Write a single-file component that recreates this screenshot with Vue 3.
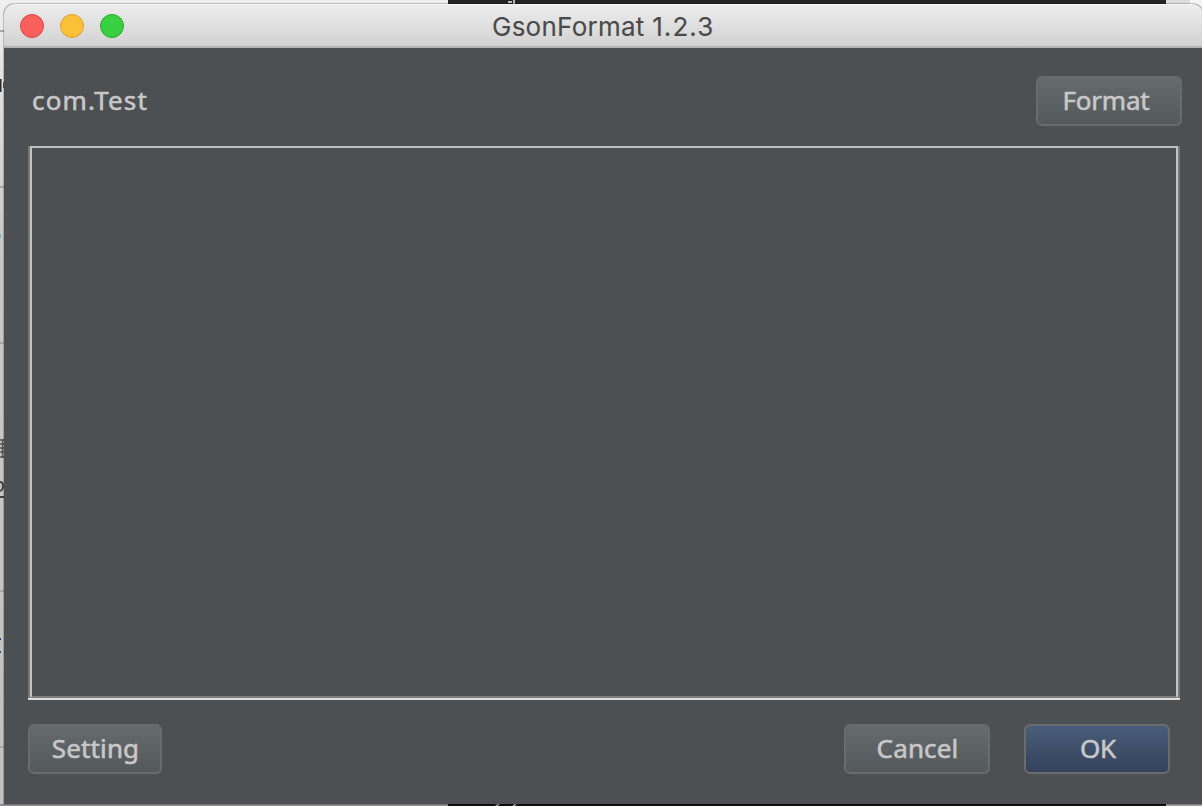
<script setup>
const lights = ['red', 'yellow', 'green']
</script>

<template>
  <main class="desktop">
    <svg class="backdrop" width="1202" height="806" aria-hidden="true">
      <defs>
        <linearGradient id="edge" x1="0" y1="0" x2="0" y2="1">
          <stop offset="0" stop-color="#efeff0" />
          <stop offset=".12" stop-color="#dedede" />
          <stop offset=".3" stop-color="#c8c8c8" />
          <stop offset="1" stop-color="#c1c1c1" />
        </linearGradient>
      </defs>
      <rect width="1202" height="806" fill="url(#edge)" />
      <rect x="448" width="718" height="4" fill="#242424" />
      <rect x="1166" width="24" height="4" fill="#dcdcdc" />
      <rect x="1190" width="12" height="8" fill="#f5f5f5" />
      <path d="M508 2h4M514 0v4" stroke="#b8b8b8" stroke-width="2" />
      <path d="M0 31h4M0 187h4M0 343h4M0 591h4M0 747h4" stroke="#a5a7aa" stroke-width="2" />
      <path d="M.5 79v13" stroke="#252b32" stroke-width="2" />
      <path d="M3.5 82v6" stroke="#765b48" stroke-width="1" />
      <path d="M0 234v4" stroke="#76b6c2" stroke-width="2" />
      <path d="M0 440h4M0 444h4M0 448h4M0 452h4M0 457h4M2.5 439v19" stroke="#555" stroke-width="1.5" />
      <path d="M0 482q3 0 3 4t-3 5M0 497h4" fill="none" stroke="#444" stroke-width="2" />
      <path d="M0 639h1M0 652h1" stroke="#26439b" stroke-width="2" />
      <rect y="804" width="448" height="2" fill="#909090" />
      <rect x="448" y="804" width="718" height="2" fill="#101010" />
      <rect x="1166" y="804" width="36" height="2" fill="#a0a0a0" />
      <path d="M496 806l3-2M513 806l3-2" stroke="#999" stroke-width="2" />
    </svg>
    <section class="window">
      <header class="titlebar">
        <div class="lights"><i v-for="c in lights" :key="c" :class="c" /></div>
        <h1>GsonFormat <span class="version">1.2.3</span></h1>
      </header>
      <div class="content">
        <div class="top">
          <label>com.Test</label>
          <button class="format">Format</button>
        </div>
        <div class="editor"><div class="inner" /></div>
        <footer>
          <button class="setting">Setting</button>
          <button class="cancel">Cancel</button>
          <button class="ok">OK</button>
        </footer>
      </div>
    </section>
  </main>
</template>

<style>
body { margin: 0; overflow: hidden; }
</style>

<style scoped>
* { box-sizing: border-box; }
.desktop { position: relative; width: 1202px; height: 806px; padding: 4px 0 0 4px; overflow: hidden; }
.backdrop { position: absolute; inset: 0; }
.window { position: relative; width: 1199px; height: 800px; border-radius: 10px 10px 0 0; background: #4c5052; overflow: hidden; box-shadow: 0 0 0 1px rgba(0, 0, 0, .2); }
.titlebar { position: relative; display: flex; align-items: center; height: 44px; padding-left: 16px; background: linear-gradient(#ececec, #d2d2d2); border-top: 1px solid #f7f7f7; border-bottom: 2px solid #b2b2b2; }
.lights { display: flex; gap: 16px; }
.lights i { width: 24px; height: 24px; border-radius: 50%; border: 1px solid transparent; }
.lights .red { background: #fc605c; border-color: #e04443; }
.lights .yellow { background: #fcc138; border-color: #dea032; }
.lights .green { background: #38d042; border-color: #27ab2c; }
h1 { position: absolute; left: 488px; top: 5px; margin: 0; font: 400 26px/34px Inter, sans-serif; letter-spacing: .25px; color: #4a4a4a; white-space: nowrap; -webkit-text-stroke: .1px; }
.version { letter-spacing: 1.1px; }
.content { padding: 28px 21px 30px 24px; font-family: "Noto Sans", sans-serif; }
.top { display: flex; align-items: flex-start; justify-content: space-between; height: 50px; }
label { padding-left: 4px; font-size: 26px; line-height: 48px; letter-spacing: 1.15px; color: #c8c8c8; -webkit-text-stroke: .55px; }
button { display: flex; align-items: center; justify-content: center; height: 50px; padding: 0 0 2px; border: 2px solid #696c6d; border-radius: 6px; background: linear-gradient(#656a6c, #54595b) padding-box #696c6d; color: #c8c8c8; font: 400 26px/44px "Noto Sans", sans-serif; letter-spacing: .15px; white-space: nowrap; -webkit-text-stroke: .55px; }
.format { width: 146px; padding-right: 6px; letter-spacing: -.2px; }
.editor { width: 1152px; height: 554px; margin-top: 20px; border-bottom: 2px solid #dbdddc; }
.inner { position: relative; width: 1148px; height: 552px; margin-left: 2px; border: 2px solid; border-color: #c2bebd #c3c3c3 #817c79; }
.inner::before, .inner::after { content: ""; position: absolute; top: -2px; bottom: -2px; width: 2px; background: #777878; }
.inner::before { left: -4px; }
.inner::after { right: -4px; }
footer { display: flex; width: 1142px; margin-top: 24px; }
.setting { width: 134px; padding-left: 1px; }
.cancel { width: 146px; margin-left: auto; padding-left: 1px; }
.ok { width: 146px; margin-left: 34px; padding-left: 2px; background: linear-gradient(#485c79, #35435c) padding-box #696c6d; letter-spacing: -.2px; }
</style>
